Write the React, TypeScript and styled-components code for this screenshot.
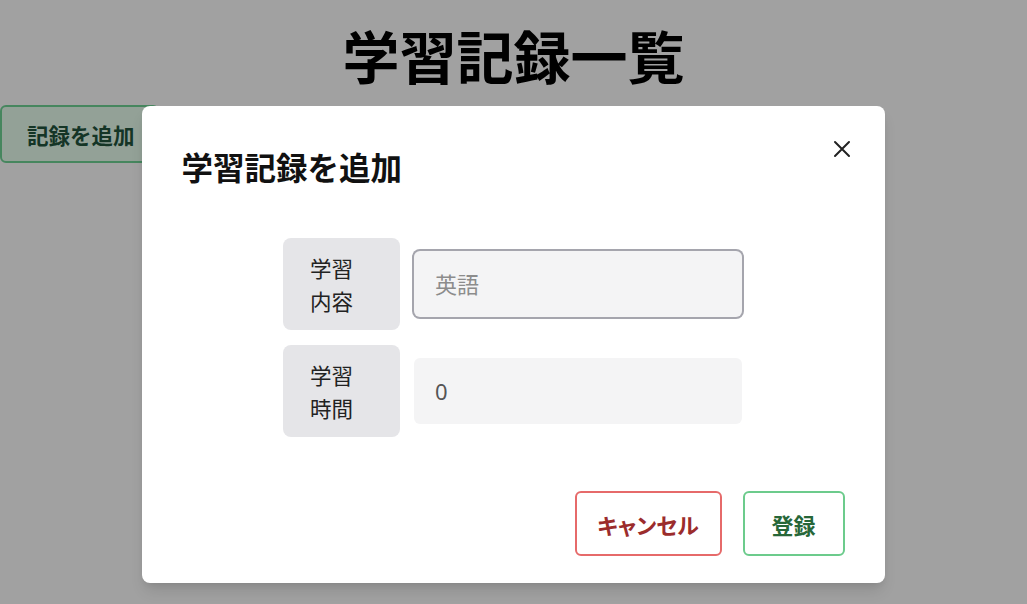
import React from "react";
import styled, { createGlobalStyle } from "styled-components";

const Global = createGlobalStyle`
  html, body { margin: 0; padding: 0; background: #ffffff; }
  body { font-family: "Noto Sans", "Noto Sans CJK JP", sans-serif; color: #1a1a1a; }
  * { box-sizing: border-box; }
`;

const Page = styled.div`
  width: 1027px;
  height: 604px;
  overflow: hidden;
  position: relative;
`;

const Title = styled.h1`
  margin: 21px 0 17px;
  font-family: "Noto Sans CJK JP", sans-serif;
  font-size: 57px;
  line-height: 67px;
  font-weight: 700;
  text-align: center;
  color: #000;
`;

const AddButton = styled.button`
  display: flex;
  align-items: center;
  height: 58px;
  width: 159px;
  padding: 0 0 0 25px;
  white-space: nowrap;
  background: #e9fff0;
  border: 2px solid #6fd496;
  border-radius: 6px;
  color: #22543d;
  font-family: "Noto Sans CJK JP", sans-serif;
  font-weight: 700;
  font-size: 21.5px;
`;

const Overlay = styled.div`
  position: absolute;
  inset: 0;
  background: rgba(0, 0, 0, 0.37);
  display: flex;
  justify-content: center;
  align-items: flex-start;
  padding-top: 106px;
  padding-right: 1px;
`;

const Modal = styled.section`
  position: relative;
  width: 743px;
  height: 477px;
  background: #fff;
  border-radius: 8px;
  box-shadow: 0 10px 15px -3px rgba(0, 0, 0, 0.12), 0 4px 6px -2px rgba(0, 0, 0, 0.06);
  display: flex;
  flex-direction: column;
`;

const Header = styled.header`
  padding: 38px 40px 0 40px;
  font-family: "Noto Sans CJK JP", sans-serif;
  font-size: 31.5px;
  line-height: 45px;
  font-weight: 700;
  color: #111;
`;

const CloseButton = styled.button`
  position: absolute;
  top: 27px;
  right: 27px;
  width: 32px;
  height: 32px;
  display: flex;
  align-items: center;
  justify-content: center;
  background: transparent;
  border: none;
  padding: 0;
  color: #222;
`;

const Body = styled.div`
  margin-top: 49px;
  display: flex;
  flex-direction: column;
  align-items: center;
  gap: 15px;
`;

const Row = styled.div`
  display: flex;
  align-items: center;
  gap: 14px;
  width: 460px;
`;

const Label = styled.label`
  width: 117px;
  height: 92px;
  padding: 13px 27px;
  background: #e5e5e8;
  border-radius: 8px;
  font-family: "Noto Sans CJK JP", sans-serif;
  font-size: 21.5px;
  line-height: 33px;
  color: #222;
  flex-shrink: 0;
`;

const Input = styled.input<{ $focused?: boolean }>`
  width: 328px;
  height: 66px;
  padding: 0 21px;
  border: none;
  border-radius: 6px;
  background: #f4f4f5;
  font-family: "Noto Sans", "Noto Sans CJK JP", sans-serif;
  font-size: 22px;
  color: #555;
  outline: none;
  box-shadow: ${(p) => (p.$focused ? "0 0 0 2px #a5a5ad" : "none")};
  &::placeholder { color: #8c8c8c; }
`;

const Footer = styled.footer`
  margin-top: auto;
  padding: 0 40px 27px;
  display: flex;
  justify-content: flex-end;
  gap: 21px;
`;

const ActionButton = styled.button<{ $tone: "red" | "green"; $w: number }>`
  width: ${(p) => p.$w}px;
  height: 65px;
  background: #fff;
  border-radius: 6px;
  border: 2px solid ${(p) => (p.$tone === "red" ? "#e66a6a" : "#6ccb8c")};
  color: ${(p) => (p.$tone === "red" ? "#9b2c2c" : "#276738")};
  font-family: "Noto Sans CJK JP", sans-serif;
  font-feature-settings: "palt";
  font-size: 22px;
  font-weight: 700;
  white-space: nowrap;
  display: flex;
  align-items: center;
  justify-content: center;
`;

export default function App() {
  return (
    <Page>
      <Global />
      <Title>学習記録一覧</Title>
      <AddButton>記録を追加</AddButton>
      <Overlay>
        <Modal>
          <Header>学習記録を追加</Header>
          <CloseButton aria-label="close">
            <svg width="18" height="18" viewBox="0 0 18 18" fill="none">
              <path d="M2 2 L16 16 M16 2 L2 16" stroke="currentColor" strokeWidth="2" strokeLinecap="round" />
            </svg>
          </CloseButton>
          <Body>
            <Row>
              <Label>学習内容</Label>
              <Input $focused placeholder="英語" />
            </Row>
            <Row>
              <Label>学習時間</Label>
              <Input defaultValue="0" />
            </Row>
          </Body>
          <Footer>
            <ActionButton $tone="red" $w={147}>キャンセル</ActionButton>
            <ActionButton $tone="green" $w={102}>登録</ActionButton>
          </Footer>
        </Modal>
      </Overlay>
    </Page>
  );
}
